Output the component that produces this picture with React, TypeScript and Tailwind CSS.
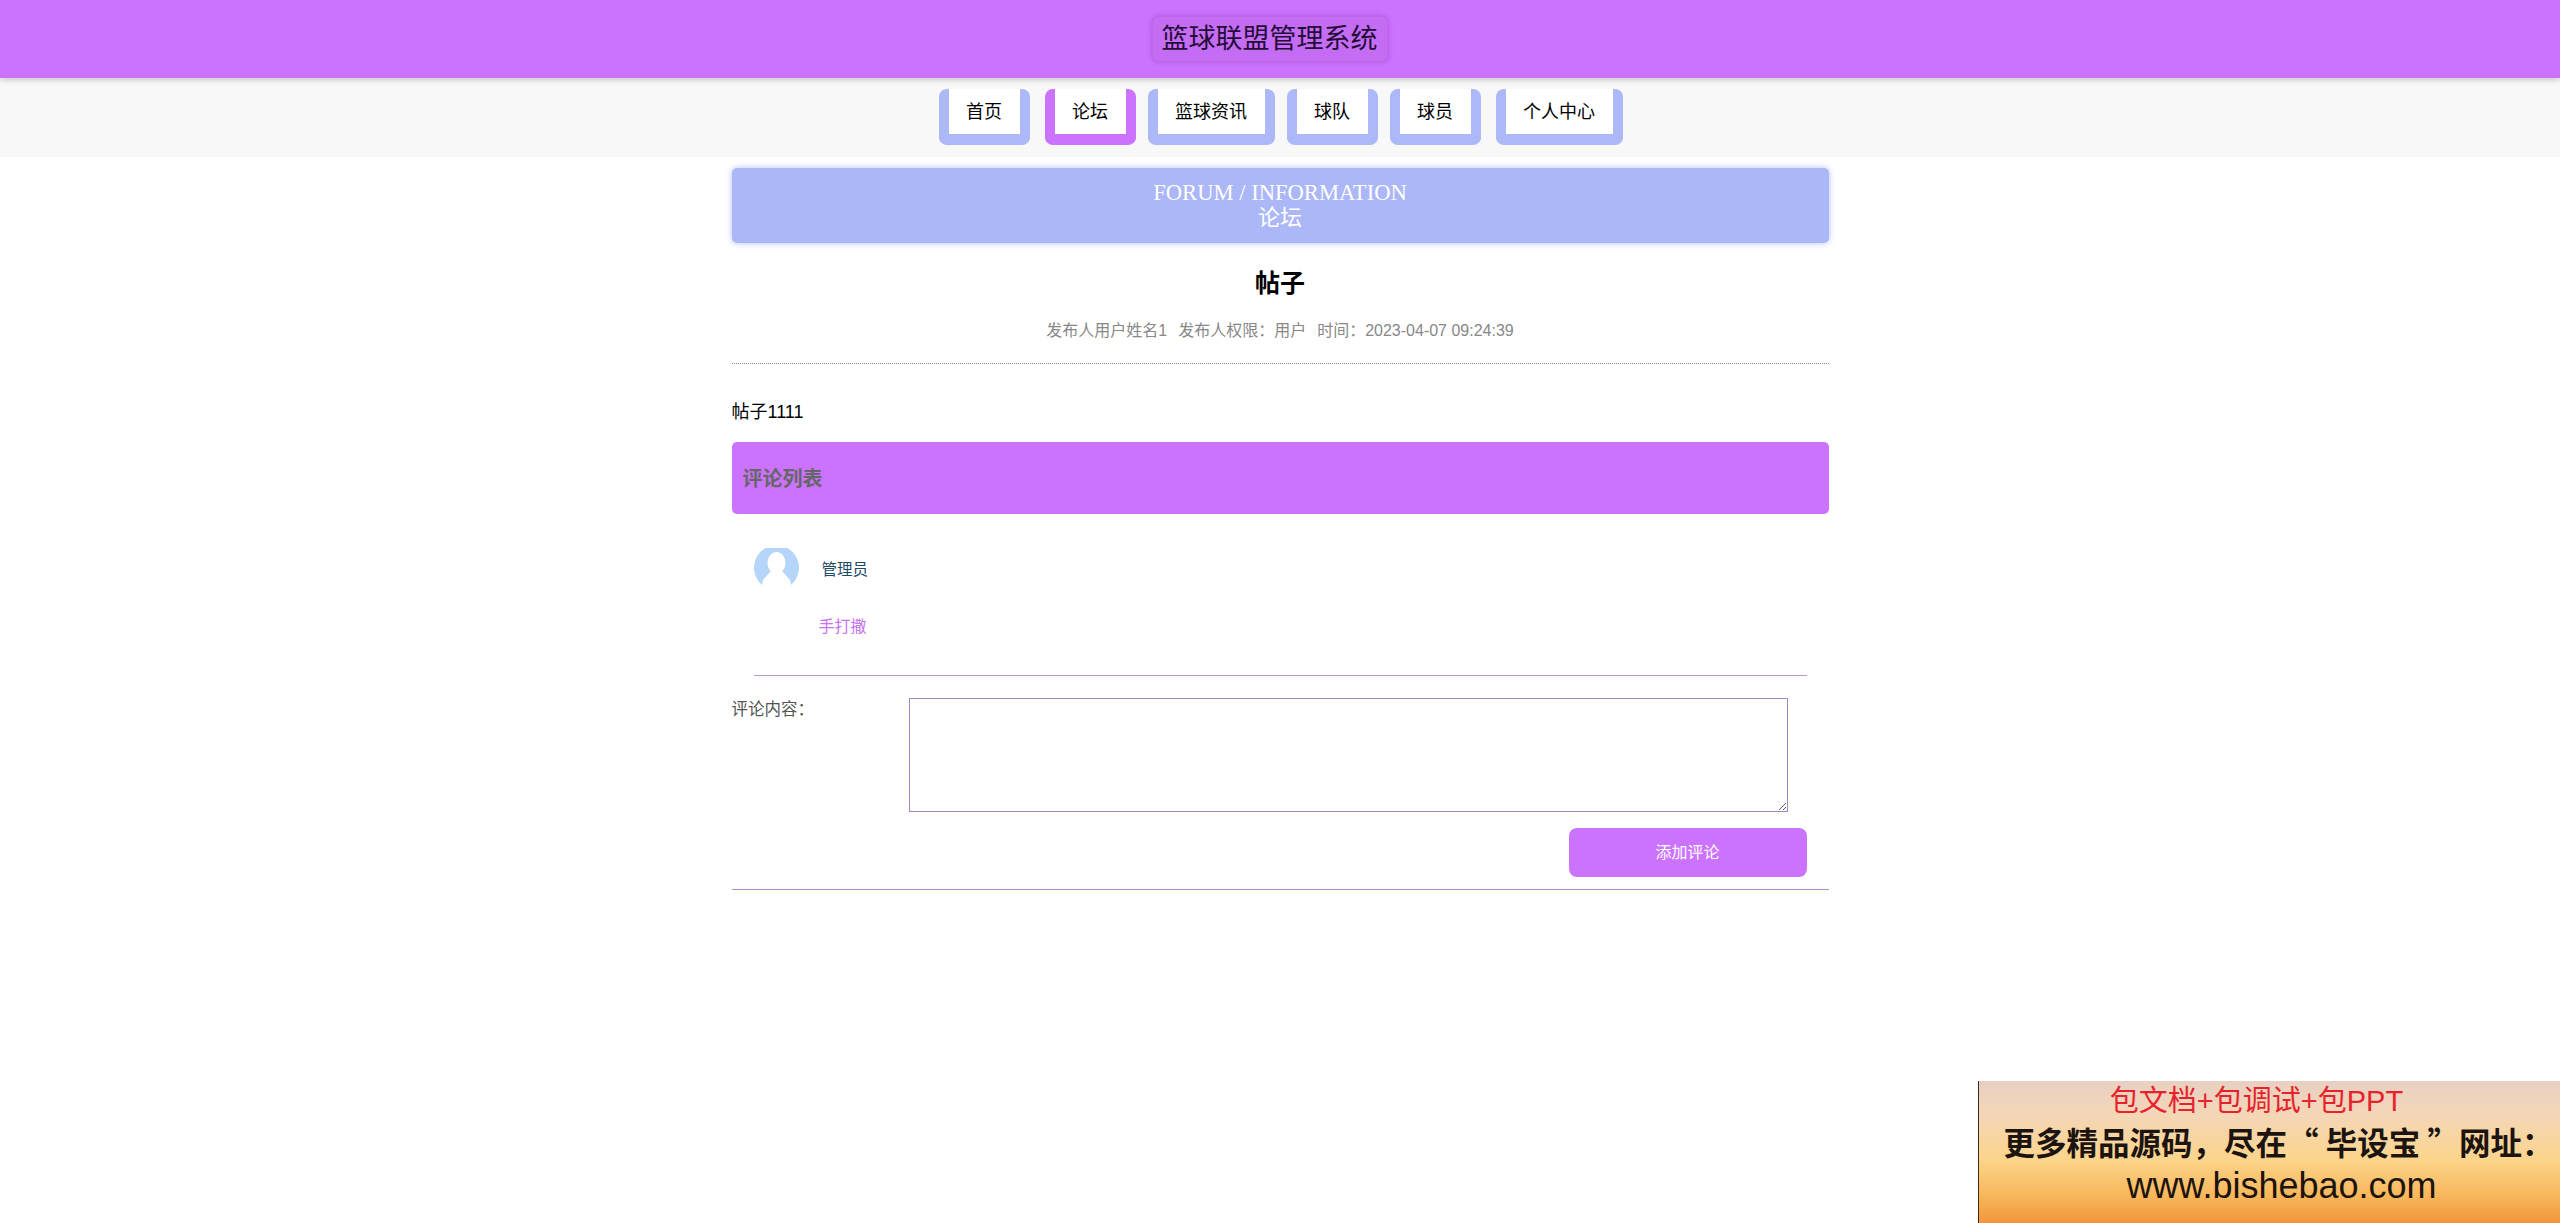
import React from "react";

const sans = "font-['Liberation_Sans','Noto_Sans_CJK_SC',sans-serif]";

const navItems = [
  { label: "首页", active: false, cls: "ml-0" },
  { label: "论坛", active: true, cls: "ml-[15px]" },
  { label: "篮球资讯", active: false, cls: "ml-[12px]" },
  { label: "球队", active: false, cls: "ml-[12px]" },
  { label: "球员", active: false, cls: "ml-[12px]" },
  { label: "个人中心", active: false, cls: "ml-[15px]" },
];

function Avatar() {
  return (
    <svg width="45" height="37" viewBox="0 0 45 37" className="block">
      <path d="M8 37 A22.5 22.5 0 1 1 37 37 Z" fill="#b5d5fb" />
      <ellipse cx="22.5" cy="15" rx="9" ry="11" fill="#fff" />
      <path d="M16 24 L9 32 L8 37 L37 37 L36 32 L29 24 Z" fill="#fff" />
    </svg>
  );
}

export default function App() {
  return (
    <div className={`${sans} min-h-[1223px] bg-white text-black`}>
      <header className="relative z-10 flex h-[78px] items-center justify-center bg-[#cb72ff] shadow-[0_2px_6px_rgba(0,0,0,0.2)]">
        <div className="mr-[21px] flex h-[46px] w-[236px] items-center justify-center rounded-[6px] border border-[#b968e6] bg-[#c56cf5] text-[27px] text-[#240c38] shadow-[0_0_5px_rgba(120,50,170,0.4)]">
          篮球联盟管理系统
        </div>
      </header>

      <nav className="flex h-[79px] justify-center bg-[#f8f8f8] pl-[1px] pt-[11px]">
        {navItems.map((n) => (
          <div
            key={n.label}
            className={`${n.cls} h-[56px] rounded-[8px] border-x-[10px] border-b-[11px] ${
              n.active ? "border-[#cb72ff]" : "border-[#acb8f8]"
            } flex items-center bg-white px-[17.5px] text-[18px] leading-none`}
          >
            {n.label}
          </div>
        ))}
      </nav>

      <main className="mx-auto w-[1097px] pt-[11px]">
        <div className="flex h-[75px] flex-col items-center justify-center rounded-[5px] bg-[#acb7f8] pb-[2px] font-['Liberation_Serif','Noto_Sans_CJK_SC',serif] text-[22.6px] leading-[25px] text-white shadow-[0_0_6px_rgba(172,183,248,0.9)]">
          <div>FORUM / INFORMATION</div>
          <div className="text-[22px]">论坛</div>
        </div>

        <h1 className="mt-[24px] text-center text-[25px] font-bold leading-[32px]">帖子</h1>
        <div className="mt-[20px] flex h-[24px] items-center justify-center text-[16px] text-[#888]">
          <span>发布人用户姓名1</span>
          <span className="ml-[11px]">发布人权限：用户</span>
          <span className="ml-[11px]">时间：2023-04-07 09:24:39</span>
        </div>
        <div className="mt-[20px] border-t border-dotted border-[#888]" />

        <p className="mt-[36px] text-[18px] leading-[24px]">帖子1111</p>

        <div className="mt-[18px] flex h-[72px] items-center rounded-[5px] bg-[#cb72ff] pl-[11px] pt-[2px] text-[20px] font-bold text-[#666]">
          评论列表
        </div>

        <section className="px-[22px]">
          <div className="flex pt-[34px]">
            <Avatar />
            <div className="ml-[23px] mt-[10px] text-[15.5px] leading-[24px] text-[#1d4b66]">管理员</div>
          </div>
          <div className="ml-[65px] mt-[30px] text-[16px] leading-[24px] text-[#c872f5]">手打撒</div>
          <div className="mt-[36px] border-t border-[#b39cc6]" />
        </section>

        <form>
          <div className="mt-[22px] flex">
            <label className="w-[177px] text-[16.5px] leading-[22px] text-[#555]">评论内容：</label>
            <textarea className="h-[114px] w-[879px] border border-[#a884c4] bg-white outline-none" />
          </div>
          <div className="mt-[16px] flex justify-end pr-[22px]">
            <button
              type="button"
              className="h-[49px] w-[238px] rounded-[8px] bg-[#cb72ff] text-[16px] text-white"
            >
              添加评论
            </button>
          </div>
          <div className="mt-[12px] border-t border-[#b88ccf]" />
        </form>
      </main>

      <aside className="fixed bottom-0 right-0 flex h-[142px] w-[582px] flex-col items-center overflow-hidden border-l border-[#3a2a20] bg-[linear-gradient(180deg,#e8d0c2_0%,#f5d6b6_25%,#fbd58c_55%,#f9b85c_80%,#f3953a_100%)] pt-[2px]">
        <div className="mr-[26px] h-[36px] text-[29px] leading-[36px] text-[#e6232c]">包文档+包调试+包PPT</div>
        <div className="ml-[18px] h-[44px] whitespace-nowrap font-['Noto_Sans_CJK_SC',sans-serif] text-[31.5px] font-semibold leading-[44px] text-[#1c1410]">
          更多精品源码，尽在“ 毕设宝 ”网址：
        </div>
        <div className="ml-[24px] mt-[1px] text-[36px] leading-[44px] text-[#1c1410]">www.bishebao.com</div>
      </aside>
    </div>
  );
}
